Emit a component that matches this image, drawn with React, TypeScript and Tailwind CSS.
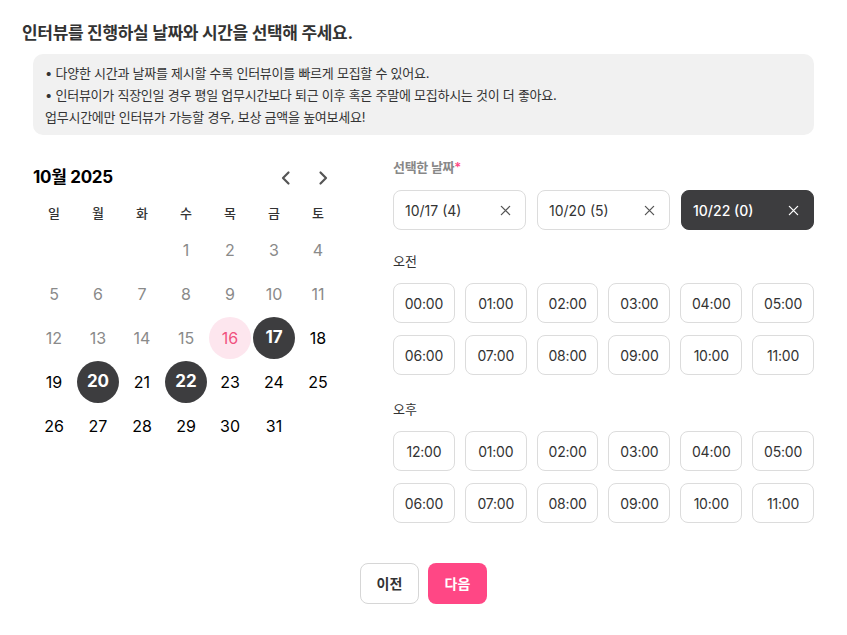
import { useState } from 'react';

const weekdays = ['일', '월', '화', '수', '목', '금', '토'];
const amTimes = ['00:00', '01:00', '02:00', '03:00', '04:00', '05:00', '06:00', '07:00', '08:00', '09:00', '10:00', '11:00'];
const pmTimes = ['12:00', '01:00', '02:00', '03:00', '04:00', '05:00', '06:00', '07:00', '08:00', '09:00', '10:00', '11:00'];

const TODAY = 16;
const FIRST_WEEKDAY = 3; // Oct 1, 2025 is a Wednesday

function CloseIcon() {
  return (
    <svg className="w-[11px] h-[11px]" viewBox="0 0 12 12" fill="none" stroke="currentColor" strokeWidth={1.4} strokeLinecap="round">
      <path d="M1.5 1.5l9 9M10.5 1.5l-9 9" />
    </svg>
  );
}

function TimeGrid({ times }: { times: string[] }) {
  return (
    <div className="grid grid-cols-6 gap-x-[10px] gap-y-[12px]">
      {times.map((t, i) => (
        <button
          key={i}
          className="h-[40px] rounded-lg border border-[#dcdcdc] bg-white text-[14px] text-[#333] tracking-[-0.2px]"
        >
          {t}
        </button>
      ))}
    </div>
  );
}

export default function App() {
  const [selected] = useState<number[]>([17, 20, 22]);
  const chips = [
    { label: '10/17 (4)', active: false },
    { label: '10/20 (5)', active: false },
    { label: '10/22 (0)', active: true },
  ];

  const cells: (number | null)[] = [];
  for (let i = 0; i < FIRST_WEEKDAY; i++) cells.push(null);
  for (let d = 1; d <= 31; d++) cells.push(d);

  return (
    <div className="w-full min-h-screen bg-white text-[#333] font-['Inter','Noto_Sans_CJK_KR',sans-serif]">
      <h1 className="px-[22px] pt-[23px] text-[17px] leading-[20px] font-bold text-[#333] tracking-[-0.3px]">
        인터뷰를 진행하실 날짜와 시간을 선택해 주세요.
      </h1>

      <div className="mx-[33px] mt-[11px] rounded-[10px] bg-[#f1f1f1] pl-[12px] pt-[8px] pb-[7px] text-[13px] leading-[22px] text-[#333] tracking-[-0.25px]">
        <p>• 다양한 시간과 날짜를 제시할 수록 인터뷰이를 빠르게 모집할 수 있어요.</p>
        <p>• 인터뷰이가 직장인일 경우 평일 업무시간보다 퇴근 이후 혹은 주말에 모집하시는 것이 더 좋아요.</p>
        <p>업무시간에만 인터뷰가 가능할 경우, 보상 금액을 높여보세요!</p>
      </div>

      <div className="flex mt-[23px] pl-[32px]">
        <div className="w-[308px]">
          <div className="h-[42px] flex items-center justify-between pl-[1px] pr-[7px] pb-[2px]">
            <span className="text-[17px] font-bold text-black tracking-[-0.3px]">10월 2025</span>
            <div className="flex items-center gap-[17px] text-[#555]">
              <svg className="w-[20px] h-[20px]" viewBox="0 0 20 20" fill="none" stroke="currentColor" strokeWidth={2.2} strokeLinecap="round" strokeLinejoin="round">
                <path d="M12.5 4.5L7 10l5.5 5.5" />
              </svg>
              <svg className="w-[20px] h-[20px]" viewBox="0 0 20 20" fill="none" stroke="currentColor" strokeWidth={2.2} strokeLinecap="round" strokeLinejoin="round">
                <path d="M7.5 4.5L13 10l-5.5 5.5" />
              </svg>
            </div>
          </div>
          <div className="grid grid-cols-7 h-[28px] items-center">
            {weekdays.map((w) => (
              <span key={w} className="text-center text-[13px] font-medium text-[#333]">{w}</span>
            ))}
          </div>
          <div className="grid grid-cols-7">
            {cells.map((d, i) => {
              if (d === null) return <div key={i} className="h-[44px]" />;
              const isSel = selected.includes(d);
              const isToday = d === TODAY;
              const past = d < TODAY;
              let cls = 'text-black';
              if (isSel) cls = 'bg-[#3d3d3f] text-white font-bold text-[17px]';
              else if (isToday) cls = 'bg-[#fde6ee] text-[#f0517e]';
              else if (past) cls = 'text-[#8a8a8a]';
              return (
                <div key={i} className="h-[44px] flex items-center justify-center">
                  <span className={`w-[42px] h-[42px] rounded-full flex items-center justify-center text-[16px] ${cls}`}>
                    {d}
                  </span>
                </div>
              );
            })}
          </div>
        </div>

        <div className="ml-[53px] w-[421px]">
          <p className="text-[13px] leading-[18px] font-semibold text-[#888] tracking-[-0.3px]">
            선택한 날짜<span className="text-[#ff4a86]">*</span>
          </p>
          <div className="grid grid-cols-3 gap-[11px] mt-[14px]">
            {chips.map((c) => (
              <div
                key={c.label}
                className={`h-[40px] rounded-lg flex items-center justify-between pl-[11px] pr-[14px] text-[14px] ${
                  c.active ? 'bg-[#3d3d3f] text-white border border-[#3d3d3f]' : 'bg-white border border-[#dcdcdc] text-[#333]'
                }`}
              >
                <span className={c.active ? 'font-medium' : ''}>{c.label}</span>
                <span className={c.active ? 'text-white' : 'text-[#555]'}>
                  <CloseIcon />
                </span>
              </div>
            ))}
          </div>

          <p className="mt-[22px] text-[13px] leading-[18px] text-[#333]">오전</p>
          <div className="mt-[13px]">
            <TimeGrid times={amTimes} />
          </div>

          <p className="mt-[25px] text-[13px] leading-[18px] text-[#333]">오후</p>
          <div className="mt-[13px]">
            <TimeGrid times={pmTimes} />
          </div>
        </div>
      </div>

      <div className="flex justify-center gap-[9px] mt-[40px] pb-[30px]">
        <button className="w-[59px] h-[41px] rounded-lg border border-[#d6d6d6] bg-white text-[14px] font-bold text-[#333]">
          이전
        </button>
        <button className="w-[59px] h-[41px] rounded-lg bg-[#ff4785] text-[14px] font-bold text-white">
          다음
        </button>
      </div>
    </div>
  );
}
